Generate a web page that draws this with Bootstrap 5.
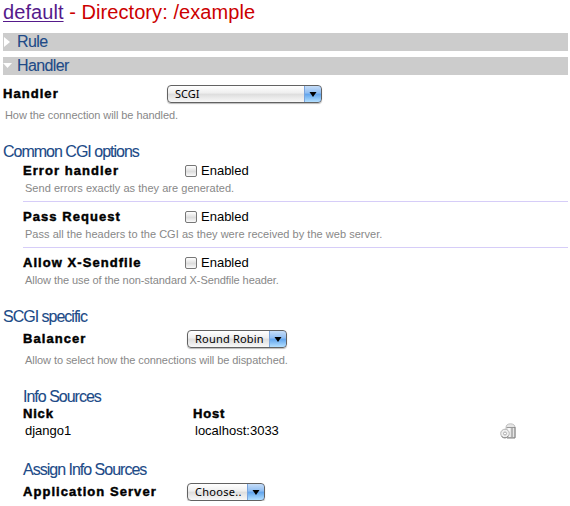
<!DOCTYPE html>
<html lang="en">
<head>
<meta charset="utf-8">
<title>default - Directory: /example</title>
<link href="https://cdn.jsdelivr.net/npm/bootstrap@5.3.0/dist/css/bootstrap.min.css" rel="stylesheet">
<style>
body{font-family:"Liberation Sans",Arial,sans-serif;font-size:13px;line-height:18px;color:#000;background:#fff;overflow:hidden}
.page{width:568px;padding-left:3px}
.page-title{font-size:20px;line-height:24px;height:33px;color:#c00;letter-spacing:.07px;white-space:nowrap}
.page-title a{color:#551a8b;text-decoration-thickness:1px;text-underline-offset:2px}
.bar{height:18px;background:#ccc;color:#204a87;font-size:16px;letter-spacing:-.6px;margin-bottom:6px;-webkit-text-stroke:.1px}
.bar .arrow{width:14px;height:18px}
.sect{font-size:16px;line-height:18px;height:18px;color:#204a87;letter-spacing:-1px;white-space:nowrap;-webkit-text-stroke:.1px}
.sub{padding-left:20px}
.line{height:18px;white-space:nowrap}
.name{font-weight:700;letter-spacing:1.05px;-webkit-text-stroke:.45px #000;width:164px;flex:none}
.sub .name{width:162px}
.hint{font-size:11px;line-height:16px;height:16px;color:#888;padding-left:2px;white-space:nowrap}
.hint.wide{letter-spacing:.03px}
.hint.tight{letter-spacing:-.07px}
.entry{height:46px;padding-top:6px}
.entry+.entry{border-top:1px solid #d6cdf8}
.first-entry{height:40px;padding-top:1px}
.check{width:12px;height:12px;border:1px solid #777;border-radius:2px;background:linear-gradient(#fff,#ddd 55%,#fafafa);margin-right:4px}
.picker{height:18px;border:1px solid #626262;border-radius:4px;background:linear-gradient(#fff,#eee 45%,#ddd 50%,#f8f8f8);font-family:"Noto Sans","Open Sans",sans-serif;font-size:11px;line-height:16px;box-shadow:0 1px 1px #bbb;overflow:hidden}
.picker .label-text{flex:1;padding-left:7px}
.picker .drop{width:18px;margin:-1px;border:1px solid #17479b;border-left-color:#7aa4dc;border-radius:0 4px 4px 0;background:linear-gradient(#c6ddf7,#8dbcf2 45%,#5fa3ec 50%,#b4e0ff)}
</style>
<script src="https://cdn.jsdelivr.net/npm/bootstrap@5.3.0/dist/js/bootstrap.bundle.min.js"></script>
</head>
<body>
<main class="page">
  <h1 class="page-title fw-normal m-0"><a href="#">default</a> - Directory: /example</h1>
  <div class="bar d-flex"><svg class="arrow" viewBox="0 0 14 18"><path d="M1 4L7 9L1 14Z" fill="#fff"/></svg><span>Rule</span></div>
  <div class="bar d-flex"><svg class="arrow" viewBox="0 0 14 18"><path d="M0 6H9L4.500 11Z" fill="#fff"/></svg><span>Handler</span></div>

  <div class="line d-flex align-items-center" style="margin-top:10px"><span class="name">Handler</span>
    <div class="picker d-flex" style="width:155px"><span class="label-text">SCGI</span><span class="drop d-flex align-items-center justify-content-center"><svg width="8" height="5"><path d="M0.500 0H7.500L4 5Z"/></svg></span></div></div>
  <div class="hint tight" style="margin-top:4px">How the connection will be handled.</div>

  <h2 class="sect fw-normal mb-0" style="margin-top:20px">Common CGI options</h2>
  <section class="sub">
    <div class="entry first-entry">
      <div class="line d-flex align-items-center"><span class="name">Error handler</span><span class="check"></span><span>Enabled</span></div>
      <div class="hint wide">Send errors exactly as they are generated.</div>
    </div>
    <div class="entry">
      <div class="line d-flex align-items-center"><span class="name">Pass Request</span><span class="check"></span><span>Enabled</span></div>
      <div class="hint wide">Pass all the headers to the CGI as they were received by the web server.</div>
    </div>
    <div class="entry">
      <div class="line d-flex align-items-center"><span class="name">Allow X-Sendfile</span><span class="check"></span><span>Enabled</span></div>
      <div class="hint tight">Allow the use of the non-standard X-Sendfile header.</div>
    </div>
  </section>

  <h2 class="sect fw-normal mb-0" style="margin-top:15px">SCGI specific</h2>
  <section class="sub">
    <div class="line d-flex align-items-center" style="margin-top:4px"><span class="name" style="width:164px">Balancer</span>
      <div class="picker d-flex" style="width:100px"><span class="label-text" style="letter-spacing:.2px">Round Robin</span><span class="drop d-flex align-items-center justify-content-center"><svg width="8" height="5"><path d="M0.500 0H7.500L4 5Z"/></svg></span></div></div>
    <div class="hint tight" style="margin-top:4px">Allow to select how the connections will be dispatched.</div>

    <h3 class="sect fw-normal mb-0" style="margin-top:20px">Info Sources</h3>
    <div class="line d-flex" style="margin-top:-1px;margin-bottom:-1px"><span class="name" style="width:170px;letter-spacing:.8px">Nick</span><span class="name" style="letter-spacing:.8px">Host</span></div>
    <div class="line d-flex align-items-center"><span style="width:170px;padding-left:2px">django1</span><span style="width:307px;padding-left:2px">localhost:3033</span>
      <svg width="16" height="16" viewBox="0 0 16 16" fill="none"><path d="M6 4.500Q6 1 10.500 .8Q15 1 15 4.500V14.500H6Z" fill="#e6e6e6" stroke="#c0c0c0"/><path d="M6.500 4.500H15" stroke="#999"/><path d="M9 5V14" stroke="#f8f8f8" stroke-width="2"/><path d="M12 5V14" stroke="#b5b5b5" stroke-width="2"/><path d="M15 4V15H7" stroke="#808080"/><circle cx="5" cy="10.500" r="4.300" fill="#eee" stroke="#b5b5b5"/><path d="M1.500 13.500Q5 16.500 8.500 13" stroke="#888"/><circle cx="5" cy="10.500" r="1.500" fill="#fff" stroke="#aaa"/></svg></div>

    <h3 class="sect fw-normal mb-0" style="margin-top:21px">Assign Info Sources</h3>
    <div class="line d-flex align-items-center" style="margin-top:4px"><span class="name" style="width:164px">Application Server</span>
      <div class="picker d-flex" style="width:78px"><span class="label-text" style="letter-spacing:.3px">Choose..</span><span class="drop d-flex align-items-center justify-content-center"><svg width="8" height="5"><path d="M0.500 0H7.500L4 5Z"/></svg></span></div></div>
  </section>
</main>
</body>
</html>
